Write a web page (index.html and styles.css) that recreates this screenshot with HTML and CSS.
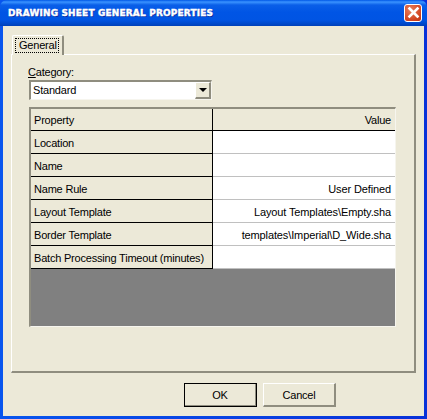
FILE: index.html
```html
<!DOCTYPE html>
<html>
	<head>
		<meta charset="UTF-8">
		<title>Drawing Sheet General Properties</title>
		<link rel="stylesheet" href="styles.css">
	</head>
	<body>
		<div class="window">
			<div class="titlebar">
				<span class="title">Drawing Sheet General Properties</span>
				<div class="close">
					<svg width="13" height="13" viewBox="0 0 13 13"><path d="M2.5 2.5 L10.5 10.5 M10.5 2.5 L2.5 10.5" stroke="#fff" stroke-width="2.6" stroke-linecap="square"/></svg>
				</div>
			</div>
			<div class="client">
				<div class="tabs">
					<div class="tab"><span class="tab-text">General</span></div>
				</div>
				<div class="panel">
					<div class="label"><u>C</u>ategory:</div>
					<div class="select">
						<span class="select-text">Standard</span>
						<div class="select-btn"><i class="arrow"></i></div>
					</div>
					<div class="grid">
						<div class="row">
							<div class="cell key">Property</div>
							<div class="cell head">Value</div>
						</div>
						<div class="row">
							<div class="cell key">Location</div>
							<div class="cell val"></div>
						</div>
						<div class="row">
							<div class="cell key">Name</div>
							<div class="cell val"></div>
						</div>
						<div class="row">
							<div class="cell key">Name Rule</div>
							<div class="cell val">User Defined</div>
						</div>
						<div class="row">
							<div class="cell key">Layout Template</div>
							<div class="cell val">Layout Templates\Empty.sha</div>
						</div>
						<div class="row">
							<div class="cell key">Border Template</div>
							<div class="cell val">templates\Imperial\D_Wide.sha</div>
						</div>
						<div class="row">
							<div class="cell key">Batch Processing Timeout (minutes)</div>
							<div class="cell val"></div>
						</div>
						<div class="empty"></div>
					</div>
				</div>
				<div class="buttons">
					<div class="btn default"><span>OK</span></div>
					<div class="btn"><span>Cancel</span></div>
				</div>
			</div>
		</div>
	</body>
</html>
```

FILE: styles.css
```css
*{
	box-sizing: border-box;
}
body{
	margin: 0;
	background-color: #ECE9D8;
	font-family: "Liberation Sans", Arial, sans-serif;
	font-size: 11px;
	letter-spacing: -0.2px;
	color: #000;
}
.window{
	width: 427px;
	height: 419px;
	display: flex;
	flex-direction: column;
	background: linear-gradient(to right, #0855EE 0, #0855EE 3px, #0831D9 424px);
}
.titlebar{
	height: 26px;
	flex: none;
	display: flex;
	align-items: center;
	justify-content: space-between;
	padding: 0 5px 0 8px;
	border-radius: 7px 7px 0 0;
	background: linear-gradient(to bottom, #0058E6 0, #3A93FF 2px, #0A5FE8 5px, #0055E5 12px, #0054E3 20px, #0048C8 24px, #0040B8 26px);
}
.title{
	color: #fff;
	font-family: "DejaVu Sans", sans-serif;
	font-weight: bold;
	font-size: 9px;
	letter-spacing: 0.15px;
	text-transform: uppercase;
	-webkit-text-stroke: 0.4px #fff;
	text-shadow: 1px 1px 0 #0A2A9C;
	white-space: nowrap;
}
.close{
	width: 18px;
	height: 18px;
	margin-top: -1px;
	display: flex;
	align-items: center;
	justify-content: center;
	border: 1px solid #fff;
	border-radius: 3px;
	background: radial-gradient(circle at 35% 30%, #E8805C, #D0431F 70%, #B83210);
}
.client{
	flex: 1;
	margin: 0 3px 3px;
	padding: 9px 8px 0;
	background-color: #ECE9D8;
	display: flex;
	flex-direction: column;
}
.tabs{
	display: flex;
	padding-left: 1px;
	height: 20px;
	flex: none;
	position: relative;
	z-index: 1;
}
.tab{
	width: 52px;
	height: 20px;
	padding: 2px 3px 2px 2px;
	background-color: #ECE9D8;
	border-left: 1px solid #fff;
	border-top: 1px solid #fff;
	border-right: 2px solid #8F8D7F;
	border-radius: 2px 2px 0 0;
}
.tab-text{
	display: block;
	height: 15px;
	line-height: 13px;
	padding-left: 3px;
	border: 1px dotted #000;
	white-space: nowrap;
}
.panel{
	width: 405px;
	height: 319px;
	flex: none;
	margin-top: -1px;
	padding: 10px 19px 0 17px;
	border-top: 1px solid #fff;
	border-left: 1px solid #fff;
	border-right: 2px solid #8F8D7F;
	border-bottom: 2px solid #8F8D7F;
}
.label{
	height: 15px;
	line-height: 14px;
	margin-left: -1px;
}
.select{
	width: 183px;
	height: 20px;
	display: flex;
	justify-content: space-between;
	background-color: #fff;
	border-top: 2px solid #8F8D7F;
	border-left: 2px solid #8F8D7F;
	border-right: 1px solid #F6F5EE;
	border-bottom: 1px solid #F6F5EE;
}
.select-text{
	padding: 1px 2px;
	line-height: 14px;
}
.select-btn{
	width: 16px;
	height: 17px;
	display: flex;
	align-items: center;
	justify-content: center;
	background-color: #ECE9D8;
	border-top: 1px solid #fff;
	border-left: 1px solid #fff;
	border-right: 2px solid #8F8D7F;
	border-bottom: 2px solid #8F8D7F;
}
.arrow{
	width: 0;
	height: 0;
	border-left: 4px solid transparent;
	border-right: 4px solid transparent;
	border-top: 4px solid #000;
}
.grid{
	width: 367px;
	height: 220px;
	margin-top: 7px;
	display: flex;
	flex-direction: column;
	border-top: 2px solid #8F8D7F;
	border-left: 2px solid #8F8D7F;
	border-right: 1px solid #F6F5EE;
	border-bottom: 1px solid #F6F5EE;
}
.row{
	display: flex;
	height: 23px;
	flex: none;
}
.row:first-child{
	height: 22px;
}
.cell{
	line-height: 22px;
	padding: 1px 3px 0;
	white-space: nowrap;
	overflow: hidden;
}
.row:first-child .cell{
	padding-top: 0;
}
.key{
	width: 182px;
	flex: none;
	background-color: #ECE9D8;
	border-right: 1px solid #000;
	border-bottom: 1px solid #000;
}
.head{
	flex: 1;
	text-align: right;
	padding-right: 4px;
	background-color: #ECE9D8;
	border-bottom: 1px solid #000;
}
.val{
	flex: 1;
	text-align: right;
	padding-right: 4px;
	letter-spacing: -0.12px;
	background-color: #fff;
	border-bottom: 1px solid #C0C0C0;
}
.row:last-of-type .cell{
	border-bottom: 1px solid #000;
}
.empty{
	flex: 1;
	background-color: #808080;
}
.buttons{
	display: flex;
	gap: 6px;
	margin-top: 10px;
	padding-left: 173px;
}
.btn{
	width: 73px;
	height: 24px;
	display: flex;
	align-items: center;
	justify-content: center;
	background-color: #ECE9D8;
	border-top: 1px solid #fff;
	border-left: 1px solid #fff;
	border-right: 2px solid #8F8D7F;
	border-bottom: 2px solid #8F8D7F;
}
.default{
	outline: 1px solid #000;
	outline-offset: -1px;
}
```
